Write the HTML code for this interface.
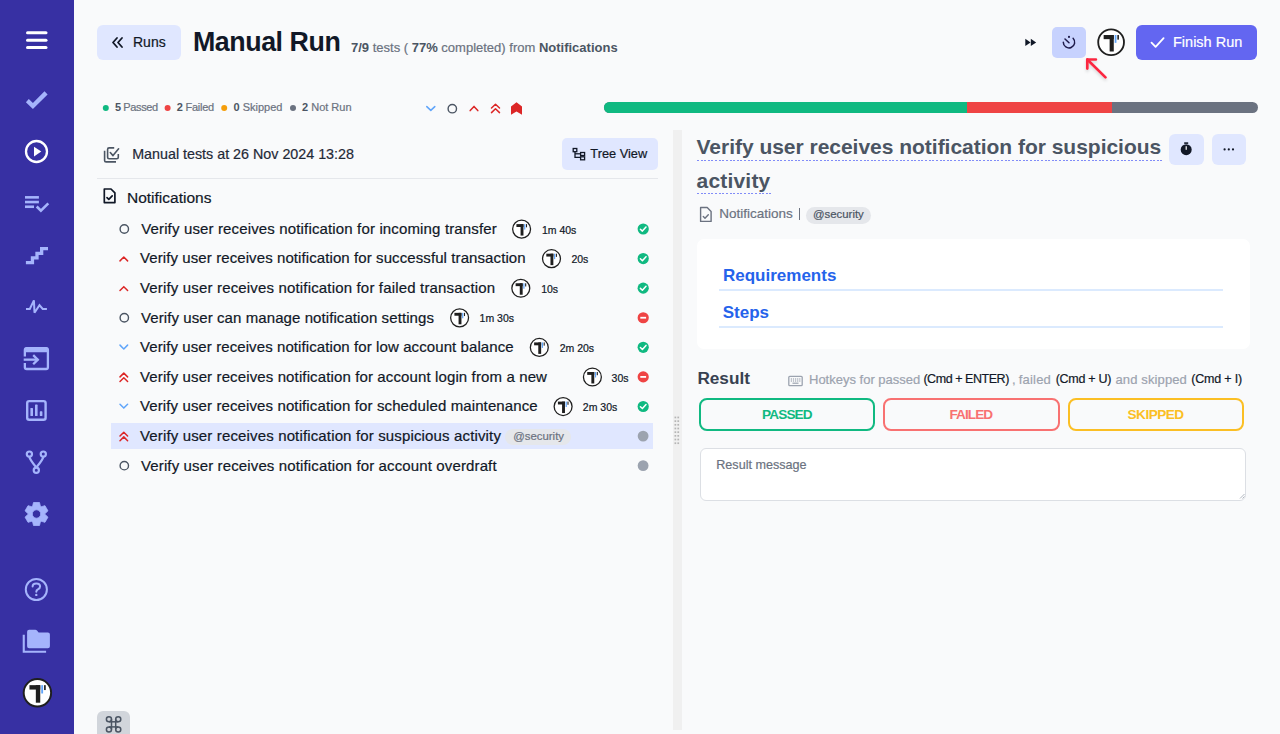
<!DOCTYPE html>
<html><head><meta charset="utf-8">
<style>
*{box-sizing:border-box;margin:0;padding:0}
html,body{width:1280px;height:734px;overflow:hidden}
body{background:#f9fafb;font-family:"Liberation Sans",sans-serif;position:relative;color:#111827}
.a{position:absolute}
.t{position:absolute;white-space:nowrap;line-height:1;-webkit-text-stroke:0.2px currentColor}
svg{position:absolute;overflow:visible}
#side{left:0;top:0;width:74px;height:734px;background:#3730a3}
.btn{position:absolute;border-radius:6px}
.row .tx{position:absolute;white-space:nowrap;line-height:1;font-size:15px;letter-spacing:0.14px;color:#111827}
.tm{position:absolute;white-space:nowrap;line-height:1;font-size:10.5px;color:#111827}
</style></head>
<body>
<svg width="0" height="0" style="position:absolute">
  <defs>
    <g id="logo">
      <circle cx="15" cy="15" r="14" fill="#fff" stroke="#1f1f1f" stroke-width="2"/>
      <rect x="6.9" y="7.2" width="11" height="4.5" fill="#1f1f1f"/>
      <rect x="13.4" y="7.2" width="4.5" height="17.9" fill="#1f1f1f"/>
      <rect x="18.9" y="7.2" width="1.9" height="8.5" fill="#60a5fa"/>
      <rect x="21.8" y="7.2" width="1.7" height="5" fill="#1f1f1f"/>
    </g>
  </defs>
</svg>

<!-- SIDEBAR -->
<div id="side" class="a">
  <svg style="left:0;top:0" width="74" height="734">
    <g stroke="#fff" stroke-width="3" stroke-linecap="round">
      <line x1="27.5" y1="32.7" x2="46" y2="32.7"/>
      <line x1="27.5" y1="40.2" x2="46" y2="40.2"/>
      <line x1="27.5" y1="47.5" x2="46" y2="47.5"/>
    </g>
    <polygon points="25.9,102.2 28.8,99.1 32.9,103 44.5,91.3 47.6,94.6 32.9,109.1" fill="#a5b4fc"/>
    <circle cx="36.5" cy="151.5" r="10.5" fill="none" stroke="#fff" stroke-width="2.3"/>
    <polygon points="34,146.8 34,156.4 41.3,151.6" fill="#fff"/>
    <g fill="none" stroke="#a5b4fc" stroke-width="2.6">
      <line x1="25" y1="197.35" x2="38.9" y2="197.35"/>
      <line x1="25" y1="202.05" x2="38.9" y2="202.05"/>
      <line x1="25" y1="206.75" x2="34" y2="206.75"/>
      <polyline points="36.7,206.5 40.9,210.7 48.3,203.4"/>
    </g>
    <path d="M25.9,262.55 H32.45 V257.95 H37 V253.4 H41.65 V248.6 H48" fill="none" stroke="#a5b4fc" stroke-width="3.3" stroke-linejoin="miter"/>
    <path d="M26,309 H29.8 L33.9,300.4 L34.5,312.8 L39.5,305.2 L42.7,309 H46.9" fill="none" stroke="#a5b4fc" stroke-width="2" stroke-linejoin="miter" stroke-miterlimit="3"/>
    <g fill="none" stroke="#a5b4fc" stroke-width="2.3">
      <path d="M24.85,356.4 V350 Q24.85,348.15 26.7,348.15 H46.1 Q47.9,348.15 47.9,350 V367.2 Q47.9,369 46.1,369 H26.7 Q24.85,369 24.85,367.2 V362.9"/>
      <line x1="23.7" y1="359.65" x2="38.2" y2="359.65"/>
      <polyline points="33.2,355.1 37.8,359.65 33.2,364.2" stroke-linejoin="miter"/>
    </g>
    <rect x="24.85" y="347.2" width="23.05" height="5" rx="1.5" fill="#a5b4fc"/>
    <rect x="27.2" y="401.1" width="18.4" height="18.6" rx="2" fill="none" stroke="#a5b4fc" stroke-width="2.4"/>
    <g fill="#a5b4fc">
      <rect x="30.4" y="407.9" width="2.6" height="8.1" rx="0.6"/>
      <rect x="35" y="404.6" width="2.6" height="11.4" rx="0.6"/>
      <rect x="39.8" y="411.3" width="2.6" height="4.7" rx="0.6"/>
    </g>
    <g fill="none" stroke="#a5b4fc" stroke-width="2.2">
      <circle cx="29.4" cy="454.1" r="2.6"/>
      <circle cx="43.3" cy="454.1" r="2.6"/>
      <circle cx="36.3" cy="470.2" r="2.6"/>
      <path d="M29.4,456.7 Q29.6,459.5 36.3,467.5"/>
      <path d="M43.3,456.7 Q43.1,459.5 36.3,467.5"/>
    </g>
    <path fill="#a5b4fc" fill-rule="evenodd" stroke="#a5b4fc" stroke-width="0.8" stroke-linejoin="round" d="M32.40,507.01 L33.50,502.50 L39.50,502.50 L40.60,507.01 A8.1,8.1 0 0 1 40.50,506.96 L44.96,505.65 L47.96,510.85 L44.60,514.06 A8.1,8.1 0 0 1 44.60,513.94 L47.96,517.15 L44.96,522.35 L40.50,521.04 A8.1,8.1 0 0 1 40.60,520.99 L39.50,525.50 L33.50,525.50 L32.40,520.99 A8.1,8.1 0 0 1 32.50,521.04 L28.04,522.35 L25.04,517.15 L28.40,513.94 A8.1,8.1 0 0 1 28.40,514.06 L25.04,510.85 L28.04,505.65 L32.50,506.96 A8.1,8.1 0 0 1 32.40,507.01 Z M36.5,509.8 A4.2,4.2 0 1 0 36.5,518.2 A4.2,4.2 0 1 0 36.5,509.8 Z"/>
    <circle cx="36.35" cy="589.5" r="10.55" fill="none" stroke="#a5b4fc" stroke-width="2"/>
    <path d="M32.6,586.6 Q32.6,583.4 36.3,583.4 Q40.1,583.4 40.1,586.5 Q40.1,588.4 37.9,589.4 Q36.3,590.2 36.3,591.8" fill="none" stroke="#a5b4fc" stroke-width="2" stroke-linecap="round"/>
    <circle cx="36.3" cy="594.9" r="1.2" fill="#a5b4fc"/>
    <path d="M29.1,629.7 H35.3 Q36.3,629.7 37,630.5 L38.6,632.4 H47.9 Q49.9,632.4 49.9,634.4 V646.2 Q49.9,648.2 47.9,648.2 H29.1 Q27.1,648.2 27.1,646.2 V631.7 Q27.1,629.7 29.1,629.7 Z" fill="#a5b4fc"/>
    <path d="M23.75,634.7 V651.7 H46.1" fill="none" stroke="#a5b4fc" stroke-width="2.1"/>
    <use href="#logo" transform="translate(22.7,678.1) scale(0.98)"/>

  </svg>
</div>

<!-- HEADER -->
<div class="btn" style="left:97px;top:25px;width:84px;height:35px;background:#e0e7ff"></div>
<svg style="left:0;top:0" width="200" height="70">
  <g fill="none" stroke="#111827" stroke-width="1.8" stroke-linecap="round" stroke-linejoin="round">
    <polyline points="117,38 113,42.5 117,47"/>
    <polyline points="122,38 118,42.5 122,47"/>
  </g>
</svg>
<div class="t" style="left:133px;top:35.2px;font-size:14px;color:#111827">Runs</div>
<div class="t" style="left:193px;top:29.4px;font-size:26.8px;font-weight:700;letter-spacing:-0.45px;color:#111827;-webkit-text-stroke:0">Manual Run</div>
<div class="t" style="left:351px;top:41px;font-size:13px;color:#6b7280"><b style="color:#4b5563;-webkit-text-stroke:0">7/9</b> tests ( <b style="color:#4b5563;-webkit-text-stroke:0">77%</b> completed) from <b style="color:#4b5563;-webkit-text-stroke:0">Notifications</b></div>


<!-- header right -->
<svg style="left:0;top:0" width="1280" height="120">
  <polygon points="1025.3,38.8 1025.3,46 1030.6,42.4" fill="#111827"/>
  <polygon points="1030.8,38.8 1030.8,46 1036.2,42.4" fill="#111827"/>
</svg>
<div class="btn" style="left:1051.7px;top:26.8px;width:34.6px;height:31.6px;background:#c7d2fe;border-radius:5px"></div>
<svg style="left:0;top:0" width="1280" height="120">
  <g fill="none" stroke="#1e1b4b" stroke-width="1.5" stroke-linecap="round">
    <path d="M1063.3,42.2 A5.7,5.7 0 1 0 1073.1,38.2"/>
    <line x1="1065" y1="39" x2="1069" y2="42.8"/>
  </g>
  <circle cx="1069" cy="36.9" r="1.05" fill="#1e1b4b"/>
  <use href="#logo" transform="translate(1097.3,28.4) scale(0.92)"/>
  <!-- red arrow -->
  <g filter="url(#shd)">
  <g stroke="#fb2840" stroke-width="2.7" stroke-linecap="round" stroke-linejoin="round" fill="none">
    <line x1="1087.3" y1="59.5" x2="1105.5" y2="77.4"/>
    <polyline points="1087.3,68.6 1087.3,59.5 1095.9,59.5"/>
  </g>
  </g>
  <defs><filter id="shd" x="-50%" y="-50%" width="200%" height="200%"><feDropShadow dx="0" dy="2" stdDeviation="1.5" flood-color="#000" flood-opacity="0.15"/></filter></defs>
</svg>
<div class="btn" style="left:1136.3px;top:25px;width:121.2px;height:35px;background:#6366f1"></div>
<svg style="left:0;top:0" width="1280" height="120">
  <polyline points="1151.5,42.6 1155.6,46.9 1163.6,38.2" fill="none" stroke="#fff" stroke-width="1.8" stroke-linecap="round" stroke-linejoin="round"/>
</svg>
<div class="t" style="left:1173px;top:34.5px;font-size:14.5px;color:#fff">Finish Run</div>

<!-- legend -->
<svg style="left:0;top:0" width="1280" height="130">
  <circle cx="105.8" cy="107.9" r="3" fill="#10b981"/>
  <circle cx="167.6" cy="107.9" r="3" fill="#ef4444"/>
  <circle cx="224.2" cy="107.9" r="3" fill="#f59e0b"/>
  <circle cx="293" cy="107.9" r="3" fill="#6b7280"/>
</svg>
<div class="t" style="left:115px;top:102.4px;font-size:11px;letter-spacing:-0.4px;color:#6b7280"><b style="color:#4b5563;-webkit-text-stroke:0">5</b> Passed</div>
<div class="t" style="left:176.8px;top:102.4px;font-size:11px;letter-spacing:-0.25px;color:#6b7280"><b style="color:#4b5563;-webkit-text-stroke:0">2</b> Failed</div>
<div class="t" style="left:233.5px;top:102.4px;font-size:11px;color:#6b7280"><b style="color:#4b5563;-webkit-text-stroke:0">0</b> Skipped</div>
<div class="t" style="left:302px;top:102.4px;font-size:11px;color:#6b7280"><b style="color:#4b5563;-webkit-text-stroke:0">2</b> Not Run</div>

<!-- filter icons -->
<svg style="left:0;top:0" width="1280" height="130">
  <polyline points="426.8,106.6 430.8,110.4 434.8,106.6" fill="none" stroke="#60a5fa" stroke-width="1.5" stroke-linecap="round" stroke-linejoin="round"/>
  <circle cx="452.3" cy="108.7" r="4.2" fill="none" stroke="#4b5563" stroke-width="1.4"/>
  <polyline points="470.2,110.6 474,106.4 477.8,110.6" fill="none" stroke="#dc2626" stroke-width="1.5" stroke-linecap="round" stroke-linejoin="round"/>
  <polyline points="491.5,108 495.5,104.2 499.5,108" fill="none" stroke="#dc2626" stroke-width="1.5" stroke-linecap="round" stroke-linejoin="round"/>
  <polyline points="491.5,112.6 495.5,108.8 499.5,112.6" fill="none" stroke="#dc2626" stroke-width="1.5" stroke-linecap="round" stroke-linejoin="round"/>
  <polygon points="516.5,102.3 522,106.4 522,114.8 516.5,111.6 511,114.8 511,106.4" fill="#dc2626"/>
</svg>

<!-- progress -->
<div class="a" style="left:603.6px;top:102.4px;width:654px;height:11px;border-radius:6px;overflow:hidden;background:#6b7280">
  <div class="a" style="left:0;top:0;width:363.4px;height:11px;background:#10b981"></div>
  <div class="a" style="left:363.4px;top:0;width:145.3px;height:11px;background:#ef4444"></div>
</div>


<!-- left panel header -->
<svg style="left:0;top:0" width="680" height="210">
  <g fill="none" stroke="#4b5563" stroke-width="1.6" stroke-linejoin="round">
    <path d="M104.6,150.8 V160.4 Q104.6,161.9 106.1,161.9 H116"/>
    <path d="M114.2,147.9 H109.1 Q107.6,147.9 107.6,149.4 V157.3 Q107.6,158.8 109.1,158.8 H116.8 Q118.3,158.8 118.3,157.3 V154"/>
    <polyline points="110.3,152.5 113,155.6 118.6,148.8" stroke-linecap="round"/>
  </g>
  <g fill="none" stroke="#111827" stroke-width="1.7" stroke-linejoin="round">
    <path d="M104.3,189 H111 L114.9,192.9 V202.6 H104.3 Z"/>
    <polyline points="107,197.6 108.8,199.4 112.2,195.8" stroke-linecap="round"/>
  </g>
</svg>
<div class="t" style="left:132.2px;top:147px;font-size:14.3px;color:#1f2937">Manual tests at 26 Nov 2024 13:28</div>
<div class="t" style="left:127px;top:189.6px;font-size:15.5px;color:#111827">Notifications</div>
<div class="a" style="left:96.6px;top:178px;width:561.2px;height:1px;background:#e5e7eb"></div>
<div class="btn" style="left:561.7px;top:138.3px;width:96.1px;height:31.5px;background:#e0e7ff;border-radius:5px"></div>
<svg style="left:0;top:0" width="680" height="210">
  <g fill="none" stroke="#111827" stroke-width="1.3">
    <rect x="573.2" y="148.5" width="3.6" height="3.2"/>
    <rect x="580.6" y="152.5" width="4" height="3"/>
    <rect x="580.6" y="156.8" width="4" height="3"/>
    <polyline points="575,151.7 575,157.3 580.6,157.3"/>
    <line x1="575" y1="153.8" x2="580.6" y2="153.8"/>
  </g>
</svg>
<div class="t" style="left:590.3px;top:148.2px;font-size:12.8px;color:#111827">Tree View</div>
<div class="a" style="left:111px;top:423.3px;width:542px;height:25.6px;background:#e0e7ff"></div>
<svg style="left:0;top:0" width="680" height="500"><circle cx="124.3" cy="229.0" r="4.2" fill="none" stroke="#4b5563" stroke-width="1.4"/><circle cx="643.2" cy="229.0" r="5.6" fill="#10b981"/><polyline points="640.4,229.2 642.4,231.1 646,227.1" fill="none" stroke="#fff" stroke-width="1.5" stroke-linecap="round" stroke-linejoin="round"/><use href="#logo" transform="translate(512,219.5) scale(0.64)"/><polyline points="120,260.88 123.8,257.08 127.6,260.88" fill="none" stroke="#dc2626" stroke-width="1.5" stroke-linecap="round" stroke-linejoin="round"/><circle cx="643.2" cy="258.58" r="5.6" fill="#10b981"/><polyline points="640.4,258.78 642.4,260.68 646,256.68" fill="none" stroke="#fff" stroke-width="1.5" stroke-linecap="round" stroke-linejoin="round"/><use href="#logo" transform="translate(541.9,249.08) scale(0.64)"/><polyline points="120,290.46000000000004 123.8,286.66 127.6,290.46000000000004" fill="none" stroke="#dc2626" stroke-width="1.5" stroke-linecap="round" stroke-linejoin="round"/><circle cx="643.2" cy="288.16" r="5.6" fill="#10b981"/><polyline points="640.4,288.36 642.4,290.26000000000005 646,286.26000000000005" fill="none" stroke="#fff" stroke-width="1.5" stroke-linecap="round" stroke-linejoin="round"/><use href="#logo" transform="translate(511.2,278.66) scale(0.64)"/><circle cx="124.3" cy="317.74" r="4.2" fill="none" stroke="#4b5563" stroke-width="1.4"/><circle cx="643.2" cy="317.74" r="5.6" fill="#ef4444"/><line x1="640.3" y1="317.74" x2="646.1" y2="317.74" stroke="#fff" stroke-width="1.8"/><use href="#logo" transform="translate(450,308.24) scale(0.64)"/><polyline points="120,345.12 123.8,348.92 127.6,345.12" fill="none" stroke="#60a5fa" stroke-width="1.5" stroke-linecap="round" stroke-linejoin="round"/><circle cx="643.2" cy="347.32" r="5.6" fill="#10b981"/><polyline points="640.4,347.52 642.4,349.42 646,345.42" fill="none" stroke="#fff" stroke-width="1.5" stroke-linecap="round" stroke-linejoin="round"/><use href="#logo" transform="translate(529.7,337.82) scale(0.64)"/><polyline points="120,376.9 123.8,373.09999999999997 127.6,376.9" fill="none" stroke="#dc2626" stroke-width="1.5" stroke-linecap="round" stroke-linejoin="round"/><polyline points="120,381.5 123.8,377.7 127.6,381.5" fill="none" stroke="#dc2626" stroke-width="1.5" stroke-linecap="round" stroke-linejoin="round"/><circle cx="643.2" cy="376.9" r="5.6" fill="#ef4444"/><line x1="640.3" y1="376.9" x2="646.1" y2="376.9" stroke="#fff" stroke-width="1.8"/><use href="#logo" transform="translate(582.8,367.4) scale(0.64)"/><polyline points="120,404.28000000000003 123.8,408.08000000000004 127.6,404.28000000000003" fill="none" stroke="#60a5fa" stroke-width="1.5" stroke-linecap="round" stroke-linejoin="round"/><circle cx="643.2" cy="406.48" r="5.6" fill="#10b981"/><polyline points="640.4,406.68 642.4,408.58000000000004 646,404.58000000000004" fill="none" stroke="#fff" stroke-width="1.5" stroke-linecap="round" stroke-linejoin="round"/><use href="#logo" transform="translate(553.5,396.98) scale(0.64)"/><polyline points="120,436.06 123.8,432.26 127.6,436.06" fill="none" stroke="#dc2626" stroke-width="1.5" stroke-linecap="round" stroke-linejoin="round"/><polyline points="120,440.66 123.8,436.86 127.6,440.66" fill="none" stroke="#dc2626" stroke-width="1.5" stroke-linecap="round" stroke-linejoin="round"/><circle cx="643.1" cy="436.06" r="5.4" fill="#9ca3af"/><circle cx="124.3" cy="465.64" r="4.2" fill="none" stroke="#4b5563" stroke-width="1.4"/><circle cx="643.1" cy="465.64" r="5.4" fill="#9ca3af"/></svg>
<div class="t" style="left:141.2px;top:220.9px;font-size:15px;letter-spacing:0.147px;color:#111827">Verify user receives notification for incoming transfer</div>
<div class="t" style="left:541.9px;top:224.71px;font-size:10.5px;color:#111827">1m 40s</div>
<div class="t" style="left:140px;top:250.48px;font-size:15px;letter-spacing:0.092px;color:#111827">Verify user receives notification for successful transaction</div>
<div class="t" style="left:571.4px;top:254.29px;font-size:10.5px;color:#111827">20s</div>
<div class="t" style="left:140px;top:280.06px;font-size:15px;letter-spacing:0.165px;color:#111827">Verify user receives notification for failed transaction</div>
<div class="t" style="left:541.2px;top:283.87px;font-size:10.5px;color:#111827">10s</div>
<div class="t" style="left:141px;top:309.64px;font-size:15px;letter-spacing:0.083px;color:#111827">Verify user can manage notification settings</div>
<div class="t" style="left:479.6px;top:313.45px;font-size:10.5px;color:#111827">1m 30s</div>
<div class="t" style="left:140px;top:339.22px;font-size:15px;letter-spacing:0.092px;color:#111827">Verify user receives notification for low account balance</div>
<div class="t" style="left:559.7px;top:343.03px;font-size:10.5px;color:#111827">2m 20s</div>
<div class="t" style="left:140px;top:368.8px;font-size:15px;letter-spacing:0.124px;color:#111827">Verify user receives notification for account login from a new</div>
<div class="t" style="left:611.6px;top:372.61px;font-size:10.5px;color:#111827">30s</div>
<div class="t" style="left:140px;top:398.38px;font-size:15px;letter-spacing:0.114px;color:#111827">Verify user receives notification for scheduled maintenance</div>
<div class="t" style="left:582.8px;top:402.19px;font-size:10.5px;color:#111827">2m 30s</div>
<div class="t" style="left:140px;top:427.96px;font-size:15px;letter-spacing:0.147px;color:#111827">Verify user receives notification for suspicious activity</div>
<div class="t" style="left:141px;top:457.54px;font-size:15px;letter-spacing:0.131px;color:#111827">Verify user receives notification for account overdraft</div>
<div class="a" style="left:505.3px;top:429.1px;width:65.3px;height:16px;border-radius:8px;background:#e5e7eb"></div>
<div class="t" style="left:513.2px;top:431.2px;font-size:11.4px;color:#6b7280">@security</div>


<!-- splitter -->
<div class="a" style="left:672.5px;top:130px;width:9.5px;height:600px;background:#f0f0f0"></div>
<svg style="left:0;top:0" width="1280" height="734">
  <g fill="#b5b5b5">
    <rect x="674.5" y="416.6" width="1.7" height="1.7"/><rect x="677.4" y="416.6" width="1.7" height="1.7"/>
    <rect x="674.5" y="420.28" width="1.7" height="1.7"/><rect x="677.4" y="420.28" width="1.7" height="1.7"/>
    <rect x="674.5" y="423.96" width="1.7" height="1.7"/><rect x="677.4" y="423.96" width="1.7" height="1.7"/>
    <rect x="674.5" y="427.64" width="1.7" height="1.7"/><rect x="677.4" y="427.64" width="1.7" height="1.7"/>
    <rect x="674.5" y="431.32" width="1.7" height="1.7"/><rect x="677.4" y="431.32" width="1.7" height="1.7"/>
    <rect x="674.5" y="435.0" width="1.7" height="1.7"/><rect x="677.4" y="435.0" width="1.7" height="1.7"/>
    <rect x="674.5" y="438.68" width="1.7" height="1.7"/><rect x="677.4" y="438.68" width="1.7" height="1.7"/>
    <rect x="674.5" y="442.36" width="1.7" height="1.7"/><rect x="677.4" y="442.36" width="1.7" height="1.7"/>
  </g>
</svg>
<!-- right title -->
<div class="t" style="left:696.5px;top:136.22px;font-size:21px;color:#4b5563;font-weight:700;letter-spacing:-0.02px;-webkit-text-stroke:0">Verify user receives notification for suspicious</div>
<div class="t" style="left:696.5px;top:169.92px;font-size:21px;color:#4b5563;font-weight:700;letter-spacing:0.2px;-webkit-text-stroke:0">activity</div>
<div class="a" style="left:696.5px;top:160px;width:466px;height:1px;background:repeating-linear-gradient(to right,#818cf8 0 2px,transparent 2px 3.62px)"></div>
<div class="a" style="left:696.5px;top:193.4px;width:74.5px;height:1px;background:repeating-linear-gradient(to right,#818cf8 0 2px,transparent 2px 3.62px)"></div>
<div class="btn" style="left:1169.4px;top:134px;width:34.4px;height:30.5px;background:#e0e7ff"></div>
<div class="btn" style="left:1211.5px;top:134px;width:34.5px;height:30.5px;background:#e0e7ff"></div>
<svg style="left:0;top:0" width="1280" height="734">
  <circle cx="1186.2" cy="149.7" r="5.5" fill="#111827"/>
  <rect x="1184.2" y="142.3" width="4" height="1.6" fill="#111827"/>
  <rect x="1185.6" y="146.2" width="1.2" height="3.6" fill="#fff"/>
  <circle cx="1224.6" cy="149.4" r="1.1" fill="#111827"/>
  <circle cx="1228.8" cy="149.4" r="1.1" fill="#111827"/>
  <circle cx="1233" cy="149.4" r="1.1" fill="#111827"/>
  <g fill="none" stroke="#6b7280" stroke-width="1.4" stroke-linejoin="round">
    <path d="M700.6,207.5 H707.2 L711.1,211.4 V221.4 H700.6 Z"/>
    <polyline points="703.3,216.6 705,218.3 708.3,214.8" stroke-linecap="round"/>
  </g>
</svg>
<div class="t" style="left:719.3px;top:206.97px;font-size:13.5px;color:#6b7280">Notifications</div>
<div class="a" style="left:798.6px;top:207.9px;width:1.3px;height:11.7px;background:#6b7280"></div>
<div class="a" style="left:805.6px;top:206.9px;width:65.3px;height:16.9px;border-radius:8.5px;background:#e5e7eb"></div>
<div class="t" style="left:813px;top:209.15px;font-size:11.4px;color:#4b5563">@security</div>
<div class="a" style="left:696.7px;top:239.2px;width:553.6px;height:109.7px;background:#fff;border-radius:7px"></div>
<div class="t" style="left:723px;top:267.31px;font-size:17px;color:#2563eb;font-weight:700;-webkit-text-stroke:0">Requirements</div>
<div class="a" style="left:719.2px;top:289.3px;width:504.2px;height:2px;background:#dbeafe"></div>
<div class="t" style="left:722.7px;top:303.71px;font-size:17px;color:#2563eb;font-weight:700;-webkit-text-stroke:0">Steps</div>
<div class="a" style="left:719.2px;top:326.2px;width:504.2px;height:2px;background:#dbeafe"></div>
<div class="t" style="left:697.4px;top:370.04px;font-size:17.2px;color:#374151;font-weight:700;-webkit-text-stroke:0">Result</div>
<svg style="left:0;top:0" width="1280" height="734">
  <rect x="788.8" y="376.3" width="13.4" height="9.4" rx="1" fill="none" stroke="#9ca3af" stroke-width="1.3"/>
  <g fill="#9ca3af">
    <rect x="790.8" y="378.4" width="1.2" height="1.2"/><rect x="792.9" y="378.4" width="1.2" height="1.2"/><rect x="795" y="378.4" width="1.2" height="1.2"/><rect x="797.1" y="378.4" width="1.2" height="1.2"/><rect x="799.2" y="378.4" width="1.2" height="1.2"/>
    <rect x="790.8" y="380.4" width="1.2" height="1.2"/><rect x="792.9" y="380.4" width="1.2" height="1.2"/><rect x="795" y="380.4" width="1.2" height="1.2"/><rect x="797.1" y="380.4" width="1.2" height="1.2"/><rect x="799.2" y="380.4" width="1.2" height="1.2"/>
    <rect x="792.5" y="382.6" width="6" height="1.2"/>
  </g>
</svg>
<div class="t" style="left:809px;top:372.8px;font-size:13px;color:#9ca3af">Hotkeys for passed</div>
<div class="t" style="left:923.4px;top:373.22px;font-size:12.5px;color:#111827;letter-spacing:-0.45px">(Cmd + ENTER)</div>
<div class="t" style="left:1012px;top:372.8px;font-size:13px;color:#9ca3af">,</div>
<div class="t" style="left:1018.75px;top:372.8px;font-size:13px;color:#9ca3af;letter-spacing:0.2px">failed</div>
<div class="t" style="left:1055.75px;top:373.22px;font-size:12.5px;color:#111827;letter-spacing:-0.3px">(Cmd + U)</div>
<div class="t" style="left:1115.5px;top:372.8px;font-size:13px;color:#9ca3af;letter-spacing:0.12px">and skipped</div>
<div class="t" style="left:1191.25px;top:373.22px;font-size:12.5px;color:#111827;letter-spacing:-0.2px">(Cmd + I)</div>
<div class="a" style="left:698.5px;top:398px;width:176.5px;height:32.5px;border:2px solid #10b981;border-radius:8px"></div>
<div class="a" style="left:883.3px;top:398px;width:176.7px;height:32.5px;border:2px solid #f87171;border-radius:8px"></div>
<div class="a" style="left:1068px;top:398px;width:176.3px;height:32.5px;border:2px solid #fbbf24;border-radius:8px"></div>
<div class="t" style="left:762.1px;top:407.6px;font-size:13.6px;color:#10b981;font-weight:700;letter-spacing:-0.88px;-webkit-text-stroke:0">PASSED</div>
<div class="t" style="left:949.5px;top:407.6px;font-size:13.6px;color:#f87171;font-weight:700;letter-spacing:-0.95px;-webkit-text-stroke:0">FAILED</div>
<div class="t" style="left:1127.5px;top:407.6px;font-size:13.6px;color:#fbbf24;font-weight:700;letter-spacing:-0.5px;-webkit-text-stroke:0">SKIPPED</div>
<div class="a" style="left:700px;top:447.5px;width:546px;height:53px;border:1px solid #dcdfe4;border-radius:6px;background:#fff"></div>
<div class="t" style="left:716.25px;top:459.33px;font-size:12.6px;color:#6b7280">Result message</div>
<svg style="left:0;top:0" width="1280" height="734">
  <g stroke="#9ca3af" stroke-width="0.8"><line x1="1240" y1="498.5" x2="1244.5" y2="494"/><line x1="1242.5" y1="498.5" x2="1244.5" y2="496.5"/></g>
</svg>
<!-- cmd button -->
<div class="btn" style="left:97px;top:711.3px;width:32.6px;height:30px;background:#d1d5db"></div>
<svg style="left:0;top:0" width="200" height="734">
  <g fill="none" stroke="#4b5563" stroke-width="1.5">
    <circle cx="108.95" cy="719.25" r="2.55"/><circle cx="118.25" cy="719.25" r="2.55"/>
    <circle cx="108.95" cy="729.45" r="2.55"/><circle cx="118.25" cy="729.45" r="2.55"/>
    <line x1="111.5" y1="719.25" x2="111.5" y2="729.45"/><line x1="115.7" y1="719.25" x2="115.7" y2="729.45"/>
    <line x1="108.95" y1="721.8" x2="118.25" y2="721.8"/><line x1="108.95" y1="726.9" x2="118.25" y2="726.9"/>
  </g>
</svg>

</body></html>
